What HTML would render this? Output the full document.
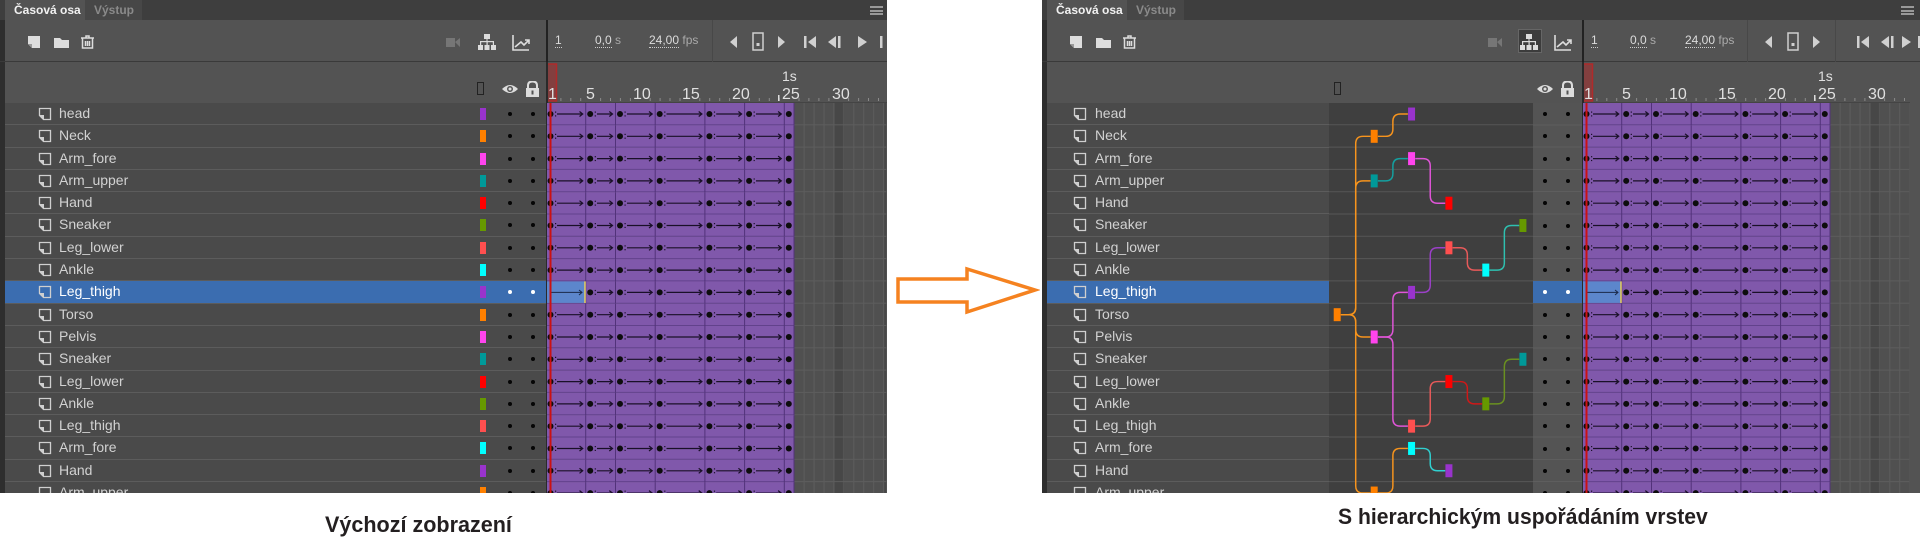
<!DOCTYPE html>
<html><head><meta charset="utf-8">
<style>
*{margin:0;padding:0;box-sizing:border-box}
body{width:1920px;height:546px;background:#fff;position:relative;overflow:hidden;font-family:"Liberation Sans",sans-serif}
.panel{position:absolute;top:0;height:493px;background:#535353;overflow:hidden}
.tabs{position:absolute;left:0;top:0;right:0;height:20px;background:#3e3e3e}
.tab{position:absolute;top:0;height:20px;font-size:12px;line-height:20px;padding-left:9px}
.t1{background:#535353;color:#f2f2f2;font-weight:bold}
.t2{background:#474747;color:#8a8a8a;font-weight:bold}
.tb{position:absolute;left:0;right:0;top:20px;height:42px;border-bottom:1px solid #3a3a3a}
.hd{position:absolute;left:0;right:0;top:62px;height:41px}
.rows{position:absolute;left:5px;top:103px}
.r{height:22.3px;position:relative;border-bottom:1px solid #5c5c5c;background:#4a4a4a;color:#d2d2d2;font-size:14px;line-height:21px;white-space:nowrap}
.r.sel{background:#3b6db0;color:#fff}
.r svg.ic{position:absolute;top:4px}
.r span.n{position:absolute}
.sw{position:absolute;top:5px;width:6px;height:12px}
.dot{position:absolute;top:9px;width:4px;height:4px;border-radius:50%;background:#050505}
.sel .dot{background:#fff}
.txt{position:absolute;color:#dcdcdc;font-size:12px}
.u{border-bottom:1px dotted #ccc}
.cap{position:absolute;font-weight:bold;color:#231f20;font-size:22px;white-space:nowrap;transform-origin:left top}
</style></head><body>

<svg width="0" height="0" style="position:absolute">
<defs>
<g id="kr">
<rect width="248.3" height="22.3" fill="#8058ab"/>
<line x1="0" y1="21.8" x2="248.3" y2="21.8" stroke="#62428c"/>
<g stroke="#52327a"><line x1="0.5" y1="0" x2="0.5" y2="22.3"/><line x1="39.7" y1="0" x2="39.7" y2="22.3"/><line x1="69.5" y1="0" x2="69.5" y2="22.3"/><line x1="109.2" y1="0" x2="109.2" y2="22.3"/><line x1="158.9" y1="0" x2="158.9" y2="22.3"/><line x1="198.6" y1="0" x2="198.6" y2="22.3"/><line x1="238.3" y1="0" x2="238.3" y2="22.3"/><line x1="248" y1="0" x2="248" y2="22.3"/></g>
<g fill="#0d0d0d"><circle cx="4.5" cy="11" r="3"/><circle cx="44.2" cy="11" r="3"/><circle cx="74" cy="11" r="3"/><circle cx="113.7" cy="11" r="3"/><circle cx="163.4" cy="11" r="3"/><circle cx="203.1" cy="11" r="3"/><circle cx="242.8" cy="11" r="3"/></g>
<g stroke="#1a1028" fill="none" stroke-width="1.2">
<path d="M11 11H36.7M33.5 8.5L36.7 11L33.5 13.5"/>
<path d="M51 11H66.5M63.3 8.5L66.5 11L63.3 13.5"/>
<path d="M81 11H106.2M103 8.5L106.2 11L103 13.5"/>
<path d="M120.5 11H155.9M152.7 8.5L155.9 11L152.7 13.5"/>
<path d="M170.2 11H195.6M192.4 8.5L195.6 11L192.4 13.5"/>
<path d="M210 11H235.3M232.1 8.5L235.3 11L232.1 13.5"/>
</g>
<g fill="#1a1028"><rect x="9" y="8.5" width="1.2" height="1.2"/><rect x="9" y="12.3" width="1.2" height="1.2"/><rect x="48.7" y="8.5" width="1.2" height="1.2"/><rect x="48.7" y="12.3" width="1.2" height="1.2"/><rect x="78.5" y="8.5" width="1.2" height="1.2"/><rect x="78.5" y="12.3" width="1.2" height="1.2"/><rect x="118.2" y="8.5" width="1.2" height="1.2"/><rect x="118.2" y="12.3" width="1.2" height="1.2"/><rect x="167.9" y="8.5" width="1.2" height="1.2"/><rect x="167.9" y="12.3" width="1.2" height="1.2"/><rect x="207.6" y="8.5" width="1.2" height="1.2"/><rect x="207.6" y="12.3" width="1.2" height="1.2"/></g>
</g>
<pattern id="gr" x="0" y="0" width="49.65" height="22.3" patternUnits="userSpaceOnUse">
<rect width="49.65" height="22.3" fill="#505050"/>
<rect x="39.7" width="9.93" height="22.3" fill="#474747"/>
<g stroke="#5d5d5d"><line x1="9.9" y1="0" x2="9.9" y2="22.3"/><line x1="19.8" y1="0" x2="19.8" y2="22.3"/><line x1="29.8" y1="0" x2="29.8" y2="22.3"/><line x1="39.7" y1="0" x2="39.7" y2="22.3"/><line x1="49.6" y1="0" x2="49.6" y2="22.3"/><line x1="0" y1="21.8" x2="49.65" y2="21.8"/></g>
</pattern>
<g id="ly"><path d="M1.5 1.5H12.5V12.5H5.5L1.5 8.5Z" fill="none" stroke="#cfcfcf" stroke-width="1.3"/><path d="M1.5 8.5H5.5V12.5" fill="#cfcfcf" stroke="#cfcfcf" stroke-width="1"/></g>
</defs>
</svg>

<!-- ============ LEFT PANEL ============ -->
<div class="panel" style="left:0;width:887px">
 <div style="position:absolute;left:0;top:0;width:5px;height:493px;background:#2e2e2e"></div>
 <div class="tabs"><div class="tab t1" style="left:5px;width:80px">Časová osa</div><div class="tab t2" style="left:85px;width:57px">Výstup</div>
 <div style="position:absolute;left:870px;top:6px;width:13px;height:9px;border-top:2px solid #999;border-bottom:2px solid #999"><div style="margin-top:1.5px;height:2px;background:#999"></div></div></div>
 <div class="tb">
  <svg style="position:absolute;left:26px;top:14px" width="70" height="16"><path d="M2 2H14V14H6L2 10Z" fill="#ddd"/><path d="M2 10H6V14" fill="#999"/><path d="M28 4H34L36 6H43V14H28Z" fill="#ddd"/><g fill="none" stroke="#ddd" stroke-width="1.5"><path d="M55 4H68M60 4V2H63V4M56.5 4.5V14H66.5V4.5M59.5 7V12M61.5 7V12M63.5 7V12"/></g></svg>
  <svg style="position:absolute;left:445px;top:13px" width="95" height="20"><path d="M1 5H10V14H1ZM10 9L15 5V14Z" fill="#767676"/><g fill="#dcdcdc"><rect x="39" y="1" width="6" height="5"/><rect x="41.5" y="6" width="1" height="3"/><rect x="35" y="8" width="14" height="1.2"/><rect x="35" y="8" width="1.2" height="4"/><rect x="47.8" y="8" width="1.2" height="4"/><rect x="41.5" y="8" width="1.2" height="4"/><rect x="33" y="12" width="5" height="5"/><rect x="39.5" y="12" width="5" height="5"/><rect x="46" y="12" width="5" height="5"/></g><path d="M68 2V17H84M70 14L76 9L79 12L84 7M80 7H84V11" fill="none" stroke="#dcdcdc" stroke-width="1.6"/></svg>
  <div style="position:absolute;left:546px;top:0;width:2px;height:42px;background:#222"></div>
  <div class="txt" style="left:555px;top:13px"><span class="u">1</span></div>
  <div class="txt" style="left:595px;top:13px"><span class="u">0,0</span> <span style="color:#aaa">s</span></div>
  <div class="txt" style="left:649px;top:13px"><span class="u">24,00</span> <span style="color:#aaa">fps</span></div>
  <div style="position:absolute;left:712px;top:0;width:1px;height:42px;background:#484848"></div>
  <svg style="position:absolute;left:728px;top:10px" width="160" height="24"><path d="M9 6V18L2 12Z" fill="#d0d0d0"/><rect x="25" y="3" width="10" height="17" fill="none" stroke="#d0d0d0" stroke-width="1.5"/><rect x="28.5" y="13" width="3" height="3" fill="#d0d0d0"/><path d="M50 6V18L57 12Z" fill="#d0d0d0"/><rect x="76" y="6" width="2.5" height="12" fill="#d0d0d0"/><path d="M88 6V18L80 12Z" fill="#d0d0d0"/><path d="M108 6V18L100 12Z" fill="#d0d0d0"/><rect x="110" y="6" width="2.5" height="12" fill="#d0d0d0"/><path d="M130 6V18L139 12Z" fill="#d0d0d0"/><rect x="152" y="6" width="2.5" height="12" fill="#d0d0d0"/></svg>
 </div>
 <div class="hd">
  <div style="position:absolute;left:477px;top:20px;width:7px;height:13px;border:1.5px solid #222"></div>
  <svg style="position:absolute;left:501px;top:19px" width="46" height="16"><path d="M1 8Q9 0 17 8Q9 16 1 8Z" fill="#dcdcdc"/><circle cx="9" cy="8" r="3" fill="#535353"/><circle cx="9" cy="8" r="1.5" fill="#dcdcdc"/><path d="M27 7V4.5Q27 0.5 31.5 0.5Q36 0.5 36 4.5V7" fill="none" stroke="#dcdcdc" stroke-width="2"/><rect x="25" y="7" width="13" height="9" fill="#dcdcdc"/><rect x="30.5" y="9.5" width="2" height="4" fill="#535353"/></svg>
  <svg style="position:absolute;left:546px;top:0" width="341" height="41">
   <rect x="0" y="2" width="10.5" height="37" fill="rgba(190,40,40,0.45)" stroke="#b02a2a" stroke-width="1.5"/>
   <g fill="#e0e0e0" font-family="Liberation Sans" font-size="16"><text x="2" y="37">1</text><text x="40" y="37">5</text><text x="87" y="37">10</text><text x="136" y="37">15</text><text x="186" y="37">20</text><text x="236" y="37">25</text><text x="286" y="37">30</text><text x="236" y="19" font-size="14">1s</text></g>
   <g stroke="#8a8a8a"><path d="M14.9 36V39M24.8 36V39M34.7 36V39M54.6 36V39M64.5 36V39M74.4 36V39M84.4 36V39M104.2 36V39M114.1 36V39M124 36V39M134 36V39M153.8 36V39M163.7 36V39M173.7 36V39M183.6 36V39M203.4 36V39M213.3 36V39M223.3 36V39M233.3 36V39M253 36V39M262.9 36V39M272.9 36V39M282.9 36V39M302.6 36V39M312.6 36V39M322.5 36V39M332.5 36V39"/></g>
   <rect x="232" y="33" width="1.5" height="6" fill="#ddd"/>
   <line x1="0" y1="40.5" x2="341" y2="40.5" stroke="#444"/>
  </svg>
 </div>
 <div class="rows" style="width:541px">
  <div class="r"><svg class="ic" style="left:33px" width="14" height="14"><use href="#ly"/></svg><span class="n" style="left:54px">head</span><i class="sw" style="left:475px;background:#9933cc"></i><i class="dot" style="left:503px"></i><i class="dot" style="left:526px"></i></div>
  <div class="r"><svg class="ic" style="left:33px" width="14" height="14"><use href="#ly"/></svg><span class="n" style="left:54px">Neck</span><i class="sw" style="left:475px;background:#ff8000"></i><i class="dot" style="left:503px"></i><i class="dot" style="left:526px"></i></div>
  <div class="r"><svg class="ic" style="left:33px" width="14" height="14"><use href="#ly"/></svg><span class="n" style="left:54px">Arm_fore</span><i class="sw" style="left:475px;background:#ff44ee"></i><i class="dot" style="left:503px"></i><i class="dot" style="left:526px"></i></div>
  <div class="r"><svg class="ic" style="left:33px" width="14" height="14"><use href="#ly"/></svg><span class="n" style="left:54px">Arm_upper</span><i class="sw" style="left:475px;background:#009999"></i><i class="dot" style="left:503px"></i><i class="dot" style="left:526px"></i></div>
  <div class="r"><svg class="ic" style="left:33px" width="14" height="14"><use href="#ly"/></svg><span class="n" style="left:54px">Hand</span><i class="sw" style="left:475px;background:#ff0000"></i><i class="dot" style="left:503px"></i><i class="dot" style="left:526px"></i></div>
  <div class="r"><svg class="ic" style="left:33px" width="14" height="14"><use href="#ly"/></svg><span class="n" style="left:54px">Sneaker</span><i class="sw" style="left:475px;background:#669900"></i><i class="dot" style="left:503px"></i><i class="dot" style="left:526px"></i></div>
  <div class="r"><svg class="ic" style="left:33px" width="14" height="14"><use href="#ly"/></svg><span class="n" style="left:54px">Leg_lower</span><i class="sw" style="left:475px;background:#ff4f4f"></i><i class="dot" style="left:503px"></i><i class="dot" style="left:526px"></i></div>
  <div class="r"><svg class="ic" style="left:33px" width="14" height="14"><use href="#ly"/></svg><span class="n" style="left:54px">Ankle</span><i class="sw" style="left:475px;background:#00ffff"></i><i class="dot" style="left:503px"></i><i class="dot" style="left:526px"></i></div>
  <div class="r sel"><svg class="ic" style="left:33px" width="14" height="14"><use href="#ly"/></svg><span class="n" style="left:54px">Leg_thigh</span><i class="sw" style="left:475px;background:#9933cc"></i><i class="dot" style="left:503px"></i><i class="dot" style="left:526px"></i></div>
  <div class="r"><svg class="ic" style="left:33px" width="14" height="14"><use href="#ly"/></svg><span class="n" style="left:54px">Torso</span><i class="sw" style="left:475px;background:#ff8000"></i><i class="dot" style="left:503px"></i><i class="dot" style="left:526px"></i></div>
  <div class="r"><svg class="ic" style="left:33px" width="14" height="14"><use href="#ly"/></svg><span class="n" style="left:54px">Pelvis</span><i class="sw" style="left:475px;background:#ff44ee"></i><i class="dot" style="left:503px"></i><i class="dot" style="left:526px"></i></div>
  <div class="r"><svg class="ic" style="left:33px" width="14" height="14"><use href="#ly"/></svg><span class="n" style="left:54px">Sneaker</span><i class="sw" style="left:475px;background:#009999"></i><i class="dot" style="left:503px"></i><i class="dot" style="left:526px"></i></div>
  <div class="r"><svg class="ic" style="left:33px" width="14" height="14"><use href="#ly"/></svg><span class="n" style="left:54px">Leg_lower</span><i class="sw" style="left:475px;background:#ff0000"></i><i class="dot" style="left:503px"></i><i class="dot" style="left:526px"></i></div>
  <div class="r"><svg class="ic" style="left:33px" width="14" height="14"><use href="#ly"/></svg><span class="n" style="left:54px">Ankle</span><i class="sw" style="left:475px;background:#669900"></i><i class="dot" style="left:503px"></i><i class="dot" style="left:526px"></i></div>
  <div class="r"><svg class="ic" style="left:33px" width="14" height="14"><use href="#ly"/></svg><span class="n" style="left:54px">Leg_thigh</span><i class="sw" style="left:475px;background:#ff4f4f"></i><i class="dot" style="left:503px"></i><i class="dot" style="left:526px"></i></div>
  <div class="r"><svg class="ic" style="left:33px" width="14" height="14"><use href="#ly"/></svg><span class="n" style="left:54px">Arm_fore</span><i class="sw" style="left:475px;background:#00ffff"></i><i class="dot" style="left:503px"></i><i class="dot" style="left:526px"></i></div>
  <div class="r"><svg class="ic" style="left:33px" width="14" height="14"><use href="#ly"/></svg><span class="n" style="left:54px">Hand</span><i class="sw" style="left:475px;background:#9933cc"></i><i class="dot" style="left:503px"></i><i class="dot" style="left:526px"></i></div>
  <div class="r"><svg class="ic" style="left:33px" width="14" height="14"><use href="#ly"/></svg><span class="n" style="left:54px">Arm_upper</span><i class="sw" style="left:475px;background:#ff8000"></i><i class="dot" style="left:503px"></i><i class="dot" style="left:526px"></i></div>
 </div>
 <svg style="position:absolute;left:546px;top:103px" width="341" height="390">
  <rect x="248.3" y="0" width="92" height="402" fill="url(#gr)"/>
  <use href="#kr" y="0"/><use href="#kr" y="22.3"/><use href="#kr" y="44.6"/><use href="#kr" y="66.9"/><use href="#kr" y="89.2"/><use href="#kr" y="111.5"/><use href="#kr" y="133.8"/><use href="#kr" y="156.1"/><use href="#kr" y="178.4"/><use href="#kr" y="200.7"/><use href="#kr" y="223"/><use href="#kr" y="245.3"/><use href="#kr" y="267.6"/><use href="#kr" y="289.9"/><use href="#kr" y="312.2"/><use href="#kr" y="334.5"/><use href="#kr" y="356.8"/><use href="#kr" y="379.1"/>
  <rect x="0" y="178.4" width="39" height="21.5" fill="#5c86cc"/>
  <path d="M4 189.4H36M33 187L36 189.4L33 192" stroke="#1a2848" fill="none"/>
  <line x1="39" y1="178.4" x2="39" y2="200" stroke="#e8d060" stroke-width="1.5"/>
  <rect x="3.5" y="0" width="2" height="390" fill="#cc1111"/>
  <line x1="0.5" y1="0" x2="0.5" y2="390" stroke="#2a2a2a"/>
 </svg>
 <div style="position:absolute;left:546px;top:62px;width:2px;height:41px;background:#2a2a2a"></div>
</div>

<!-- ARROW -->
<svg style="position:absolute;left:890px;top:260px" width="150" height="60"><path d="M8 19H77V9L145 30L77 52V42H8Z" fill="#fff" stroke="#f58220" stroke-width="3.5" stroke-linejoin="miter"/></svg>

<!-- ============ RIGHT PANEL ============ -->
<div class="panel" style="left:1042px;width:878px">
 <div style="position:absolute;left:0;top:0;width:5px;height:493px;background:#2e2e2e"></div>
 <div class="tabs"><div class="tab t1" style="left:5px;width:80px">Časová osa</div><div class="tab t2" style="left:85px;width:57px">Výstup</div>
 <div style="position:absolute;left:859px;top:6px;width:13px;height:9px;border-top:2px solid #999;border-bottom:2px solid #999"><div style="margin-top:1.5px;height:2px;background:#999"></div></div></div>
 <div class="tb">
  <svg style="position:absolute;left:26px;top:14px" width="70" height="16"><path d="M2 2H14V14H6L2 10Z" fill="#ddd"/><path d="M2 10H6V14" fill="#999"/><path d="M28 4H34L36 6H43V14H28Z" fill="#ddd"/><g fill="none" stroke="#ddd" stroke-width="1.5"><path d="M55 4H68M60 4V2H63V4M56.5 4.5V14H66.5V4.5M59.5 7V12M61.5 7V12M63.5 7V12"/></g></svg>
  <div style="position:absolute;left:476px;top:9px;width:24px;height:24px;background:#3c3c3c;border:1px solid #666"></div>
  <svg style="position:absolute;left:445px;top:13px" width="95" height="20"><path d="M1 5H10V14H1ZM10 9L15 5V14Z" fill="#767676"/><g fill="#dcdcdc"><rect x="39" y="1" width="6" height="5"/><rect x="41.5" y="6" width="1" height="3"/><rect x="35" y="8" width="14" height="1.2"/><rect x="35" y="8" width="1.2" height="4"/><rect x="47.8" y="8" width="1.2" height="4"/><rect x="41.5" y="8" width="1.2" height="4"/><rect x="33" y="12" width="5" height="5"/><rect x="39.5" y="12" width="5" height="5"/><rect x="46" y="12" width="5" height="5"/></g><path d="M68 2V17H84M70 14L76 9L79 12L84 7M80 7H84V11" fill="none" stroke="#dcdcdc" stroke-width="1.6"/></svg>
  <div style="position:absolute;left:540px;top:0;width:2px;height:42px;background:#222"></div>
  <div class="txt" style="left:549px;top:13px"><span class="u">1</span></div>
  <div class="txt" style="left:588px;top:13px"><span class="u">0,0</span> <span style="color:#aaa">s</span></div>
  <div class="txt" style="left:643px;top:13px"><span class="u">24,00</span> <span style="color:#aaa">fps</span></div>
  <div style="position:absolute;left:705px;top:0;width:1px;height:42px;background:#484848"></div>
  <div style="position:absolute;left:793px;top:0;width:1px;height:42px;background:#484848"></div>
  <svg style="position:absolute;left:721px;top:10px" width="160" height="24"><path d="M9 6V18L2 12Z" fill="#d0d0d0"/><rect x="25" y="3" width="10" height="17" fill="none" stroke="#d0d0d0" stroke-width="1.5"/><rect x="28.5" y="13" width="3" height="3" fill="#d0d0d0"/><path d="M50 6V18L57 12Z" fill="#d0d0d0"/><rect x="94" y="6" width="2.5" height="12" fill="#d0d0d0"/><path d="M106 6V18L98 12Z" fill="#d0d0d0"/><path d="M126 6V18L118 12Z" fill="#d0d0d0"/><rect x="128" y="6" width="2.5" height="12" fill="#d0d0d0"/><path d="M139 6V18L148 12Z" fill="#d0d0d0"/><rect x="155" y="6" width="2.5" height="12" fill="#d0d0d0"/></svg>
 </div>
 <div class="hd">
  <div style="position:absolute;left:292px;top:20px;width:7px;height:13px;border:1.5px solid #222"></div>
  <svg style="position:absolute;left:494px;top:19px" width="46" height="16"><path d="M1 8Q9 0 17 8Q9 16 1 8Z" fill="#dcdcdc"/><circle cx="9" cy="8" r="3" fill="#535353"/><circle cx="9" cy="8" r="1.5" fill="#dcdcdc"/><path d="M27 7V4.5Q27 0.5 31.5 0.5Q36 0.5 36 4.5V7" fill="none" stroke="#dcdcdc" stroke-width="2"/><rect x="25" y="7" width="13" height="9" fill="#dcdcdc"/><rect x="30.5" y="9.5" width="2" height="4" fill="#535353"/></svg>
  <svg style="position:absolute;left:540px;top:0" width="338" height="41">
   <rect x="0" y="2" width="10.5" height="37" fill="rgba(190,40,40,0.45)" stroke="#b02a2a" stroke-width="1.5"/>
   <g fill="#e0e0e0" font-family="Liberation Sans" font-size="16"><text x="2" y="37">1</text><text x="40" y="37">5</text><text x="87" y="37">10</text><text x="136" y="37">15</text><text x="186" y="37">20</text><text x="236" y="37">25</text><text x="286" y="37">30</text><text x="236" y="19" font-size="14">1s</text></g>
   <g stroke="#8a8a8a"><path d="M14.9 36V39M24.8 36V39M34.7 36V39M54.6 36V39M64.5 36V39M74.4 36V39M84.4 36V39M104.2 36V39M114.1 36V39M124 36V39M134 36V39M153.8 36V39M163.7 36V39M173.7 36V39M183.6 36V39M203.4 36V39M213.3 36V39M223.3 36V39M233.3 36V39M253 36V39M262.9 36V39M272.9 36V39M282.9 36V39M302.6 36V39M312.6 36V39M322.5 36V39"/></g>
   <rect x="232" y="33" width="1.5" height="6" fill="#ddd"/>
   <line x1="0" y1="40.5" x2="328" y2="40.5" stroke="#444"/>
  </svg>
 </div>
 <div class="rows" style="width:535px">
  <div class="r"><svg class="ic" style="left:26px" width="14" height="14"><use href="#ly"/></svg><span class="n" style="left:48px">head</span></div>
  <div class="r"><svg class="ic" style="left:26px" width="14" height="14"><use href="#ly"/></svg><span class="n" style="left:48px">Neck</span></div>
  <div class="r"><svg class="ic" style="left:26px" width="14" height="14"><use href="#ly"/></svg><span class="n" style="left:48px">Arm_fore</span></div>
  <div class="r"><svg class="ic" style="left:26px" width="14" height="14"><use href="#ly"/></svg><span class="n" style="left:48px">Arm_upper</span></div>
  <div class="r"><svg class="ic" style="left:26px" width="14" height="14"><use href="#ly"/></svg><span class="n" style="left:48px">Hand</span></div>
  <div class="r"><svg class="ic" style="left:26px" width="14" height="14"><use href="#ly"/></svg><span class="n" style="left:48px">Sneaker</span></div>
  <div class="r"><svg class="ic" style="left:26px" width="14" height="14"><use href="#ly"/></svg><span class="n" style="left:48px">Leg_lower</span></div>
  <div class="r"><svg class="ic" style="left:26px" width="14" height="14"><use href="#ly"/></svg><span class="n" style="left:48px">Ankle</span></div>
  <div class="r sel"><svg class="ic" style="left:26px" width="14" height="14"><use href="#ly"/></svg><span class="n" style="left:48px">Leg_thigh</span></div>
  <div class="r"><svg class="ic" style="left:26px" width="14" height="14"><use href="#ly"/></svg><span class="n" style="left:48px">Torso</span></div>
  <div class="r"><svg class="ic" style="left:26px" width="14" height="14"><use href="#ly"/></svg><span class="n" style="left:48px">Pelvis</span></div>
  <div class="r"><svg class="ic" style="left:26px" width="14" height="14"><use href="#ly"/></svg><span class="n" style="left:48px">Sneaker</span></div>
  <div class="r"><svg class="ic" style="left:26px" width="14" height="14"><use href="#ly"/></svg><span class="n" style="left:48px">Leg_lower</span></div>
  <div class="r"><svg class="ic" style="left:26px" width="14" height="14"><use href="#ly"/></svg><span class="n" style="left:48px">Ankle</span></div>
  <div class="r"><svg class="ic" style="left:26px" width="14" height="14"><use href="#ly"/></svg><span class="n" style="left:48px">Leg_thigh</span></div>
  <div class="r"><svg class="ic" style="left:26px" width="14" height="14"><use href="#ly"/></svg><span class="n" style="left:48px">Arm_fore</span></div>
  <div class="r"><svg class="ic" style="left:26px" width="14" height="14"><use href="#ly"/></svg><span class="n" style="left:48px">Hand</span></div>
  <div class="r"><svg class="ic" style="left:26px" width="14" height="14"><use href="#ly"/></svg><span class="n" style="left:48px">Arm_upper</span></div>
 </div>
 <!-- graph -->
 <svg style="position:absolute;left:287px;top:103px" width="204" height="390">
  <rect width="204" height="390" fill="#3f3f3f"/>
  <g stroke="#575757" stroke-width="1"><path d="M0 21.8H204M0 44.1H204M0 66.4H204M0 88.7H204M0 111H204M0 133.3H204M0 155.6H204M0 177.9H204M0 200.2H204M0 222.5H204M0 244.8H204M0 267.1H204M0 289.4H204M0 311.7H204M0 334H204M0 356.3H204M0 378.6H204"/></g>
  <g transform="scale(1.225)" fill="none" stroke-width="1.2">
   <path stroke="#f7941d" d="M9.7 172.8H15.8Q21.8 172.8 21.8 166.8V33.2Q21.8 27.2 27.8 27.2H33.9"/>
   <path stroke="#f7941d" d="M9.7 172.8H15.8Q21.8 172.8 21.8 166.8V69.6Q21.8 63.6 27.8 63.6H33.9"/>
   <path stroke="#f7941d" d="M9.7 172.8H15.8Q21.8 172.8 21.8 178.8V185Q21.8 191 27.8 191H33.9"/>
   <path stroke="#f7941d" d="M9.7 172.8H15.8Q21.8 172.8 21.8 178.8V312.4Q21.8 318.4 27.8 318.4H33.9"/>
   <path stroke="#f7941d" d="M39.9 27.2H46.15Q52.15 27.2 52.15 21.2V15Q52.15 9 58.15 9H64.4"/>
   <path stroke="#14a0a0" d="M39.9 63.6H46.15Q52.15 63.6 52.15 57.6V51.4Q52.15 45.4 58.15 45.4H64.4"/>
   <path stroke="#e055d8" d="M70.4 45.4H76.65Q82.65 45.4 82.65 51.4V75.8Q82.65 81.8 88.65 81.8H94.9"/>
   <path stroke="#e055d8" d="M39.9 191H46.15Q52.15 191 52.15 185V160.6Q52.15 154.6 58.15 154.6H64.4"/>
   <path stroke="#e055d8" d="M39.9 191H46.15Q52.15 191 52.15 197V257.8Q52.15 263.8 58.15 263.8H64.4"/>
   <path stroke="#9b40c8" d="M70.4 154.6H76.65Q82.65 154.6 82.65 148.6V124.2Q82.65 118.2 88.65 118.2H94.9"/>
   <path stroke="#e85a5a" d="M100.9 118.2H106.95Q112.95 118.2 112.95 124.2V130.4Q112.95 136.4 118.95 136.4H125"/>
   <path stroke="#2ec0b0" d="M131 136.4H137.15Q143.15 136.4 143.15 130.4V106Q143.15 100 149.15 100H155.3"/>
   <path stroke="#e85a5a" d="M70.4 263.8H76.65Q82.65 263.8 82.65 257.8V233.4Q82.65 227.4 88.65 227.4H94.9"/>
   <path stroke="#d01818" d="M100.9 227.4H106.95Q112.95 227.4 112.95 233.4V239.6Q112.95 245.6 118.95 245.6H125"/>
   <path stroke="#6a9020" d="M131 245.6H137.15Q143.15 245.6 143.15 239.6V215.2Q143.15 209.2 149.15 209.2H155.3"/>
   <path stroke="#f7941d" d="M39.9 318.4H46.15Q52.15 318.4 52.15 312.4V288Q52.15 282 58.15 282H64.4"/>
   <path stroke="#30d0d0" d="M70.4 282H76.65Q82.65 282 82.65 288V294.2Q82.65 300.2 88.65 300.2H94.9"/>
  </g>
  <g transform="scale(1.225)">
   <rect x="64.55" y="3.7" width="5.7" height="10.6" fill="#9933cc"/>
   <rect x="34.05" y="21.9" width="5.7" height="10.6" fill="#ff8000"/>
   <rect x="64.55" y="40.1" width="5.7" height="10.6" fill="#ff44ee"/>
   <rect x="34.05" y="58.3" width="5.7" height="10.6" fill="#009999"/>
   <rect x="95.05" y="76.5" width="5.7" height="10.6" fill="#ff0000"/>
   <rect x="155.45" y="94.7" width="5.7" height="10.6" fill="#669900"/>
   <rect x="95.05" y="112.9" width="5.7" height="10.6" fill="#ff4f4f"/>
   <rect x="125.15" y="131.1" width="5.7" height="10.6" fill="#00ffff"/>
   <rect x="64.55" y="149.3" width="5.7" height="10.6" fill="#9933cc"/>
   <rect x="3.85" y="167.5" width="5.7" height="10.6" fill="#ff8000"/>
   <rect x="34.05" y="185.7" width="5.7" height="10.6" fill="#ff44ee"/>
   <rect x="155.45" y="203.9" width="5.7" height="10.6" fill="#009999"/>
   <rect x="95.05" y="222.1" width="5.7" height="10.6" fill="#ff0000"/>
   <rect x="125.15" y="240.3" width="5.7" height="10.6" fill="#669900"/>
   <rect x="64.55" y="258.5" width="5.7" height="10.6" fill="#ff4f4f"/>
   <rect x="64.55" y="276.7" width="5.7" height="10.6" fill="#00ffff"/>
   <rect x="95.05" y="294.9" width="5.7" height="10.6" fill="#9933cc"/>
   <rect x="34.05" y="313.1" width="5.7" height="10.6" fill="#ff8000"/>
  </g>
 </svg>
 <div style="position:absolute;left:491px;top:103px;width:49px;height:390px;background:#545454"></div>
 <div style="position:absolute;left:491px;top:103px;width:49px;height:390px;background:repeating-linear-gradient(to bottom,transparent 0,transparent 21.3px,#5e5e5e 21.3px,#5e5e5e 22.3px)"></div>
 <div style="position:absolute;left:491px;top:281.4px;width:49px;height:21.3px;background:#3b6db0"></div>
 <i class="dot" style="position:absolute;left:501px;top:112px"></i><i class="dot" style="position:absolute;left:524px;top:112px"></i>
 <i class="dot" style="position:absolute;left:501px;top:134.3px"></i><i class="dot" style="position:absolute;left:524px;top:134.3px"></i>
 <i class="dot" style="position:absolute;left:501px;top:156.6px"></i><i class="dot" style="position:absolute;left:524px;top:156.6px"></i>
 <i class="dot" style="position:absolute;left:501px;top:178.9px"></i><i class="dot" style="position:absolute;left:524px;top:178.9px"></i>
 <i class="dot" style="position:absolute;left:501px;top:201.2px"></i><i class="dot" style="position:absolute;left:524px;top:201.2px"></i>
 <i class="dot" style="position:absolute;left:501px;top:223.5px"></i><i class="dot" style="position:absolute;left:524px;top:223.5px"></i>
 <i class="dot" style="position:absolute;left:501px;top:245.8px"></i><i class="dot" style="position:absolute;left:524px;top:245.8px"></i>
 <i class="dot" style="position:absolute;left:501px;top:268.1px"></i><i class="dot" style="position:absolute;left:524px;top:268.1px"></i>
 <i class="dot" style="position:absolute;left:501px;top:290.4px;background:#fff"></i><i class="dot" style="position:absolute;left:524px;top:290.4px;background:#fff"></i>
 <i class="dot" style="position:absolute;left:501px;top:312.7px"></i><i class="dot" style="position:absolute;left:524px;top:312.7px"></i>
 <i class="dot" style="position:absolute;left:501px;top:335px"></i><i class="dot" style="position:absolute;left:524px;top:335px"></i>
 <i class="dot" style="position:absolute;left:501px;top:357.3px"></i><i class="dot" style="position:absolute;left:524px;top:357.3px"></i>
 <i class="dot" style="position:absolute;left:501px;top:379.6px"></i><i class="dot" style="position:absolute;left:524px;top:379.6px"></i>
 <i class="dot" style="position:absolute;left:501px;top:401.9px"></i><i class="dot" style="position:absolute;left:524px;top:401.9px"></i>
 <i class="dot" style="position:absolute;left:501px;top:424.2px"></i><i class="dot" style="position:absolute;left:524px;top:424.2px"></i>
 <i class="dot" style="position:absolute;left:501px;top:446.5px"></i><i class="dot" style="position:absolute;left:524px;top:446.5px"></i>
 <i class="dot" style="position:absolute;left:501px;top:468.8px"></i><i class="dot" style="position:absolute;left:524px;top:468.8px"></i>
 <i class="dot" style="position:absolute;left:501px;top:491.1px"></i><i class="dot" style="position:absolute;left:524px;top:491.1px"></i>
 <svg style="position:absolute;left:540px;top:103px" width="338" height="390">
  <rect x="248.3" y="0" width="79" height="402" fill="url(#gr)"/>
  <use href="#kr" y="0"/><use href="#kr" y="22.3"/><use href="#kr" y="44.6"/><use href="#kr" y="66.9"/><use href="#kr" y="89.2"/><use href="#kr" y="111.5"/><use href="#kr" y="133.8"/><use href="#kr" y="156.1"/><use href="#kr" y="178.4"/><use href="#kr" y="200.7"/><use href="#kr" y="223"/><use href="#kr" y="245.3"/><use href="#kr" y="267.6"/><use href="#kr" y="289.9"/><use href="#kr" y="312.2"/><use href="#kr" y="334.5"/><use href="#kr" y="356.8"/><use href="#kr" y="379.1"/>
  <rect x="0" y="178.4" width="39" height="21.5" fill="#5c86cc"/>
  <path d="M4 189.4H36M33 187L36 189.4L33 192" stroke="#1a2848" fill="none"/>
  <line x1="39" y1="178.4" x2="39" y2="200" stroke="#e8d060" stroke-width="1.5"/>
  <rect x="3.5" y="0" width="2" height="390" fill="#cc1111"/>
  <line x1="0.5" y1="0" x2="0.5" y2="390" stroke="#2a2a2a"/>
 </svg>
 <div style="position:absolute;left:540px;top:62px;width:2px;height:41px;background:#2a2a2a"></div>
</div>

<div class="cap" style="left:325px;top:512px;transform:scaleX(0.98)">Výchozí zobrazení</div>
<div class="cap" style="left:1338px;top:504px;transform:scaleX(0.96)">S hierarchickým uspořádáním vrstev</div>
</body></html>
